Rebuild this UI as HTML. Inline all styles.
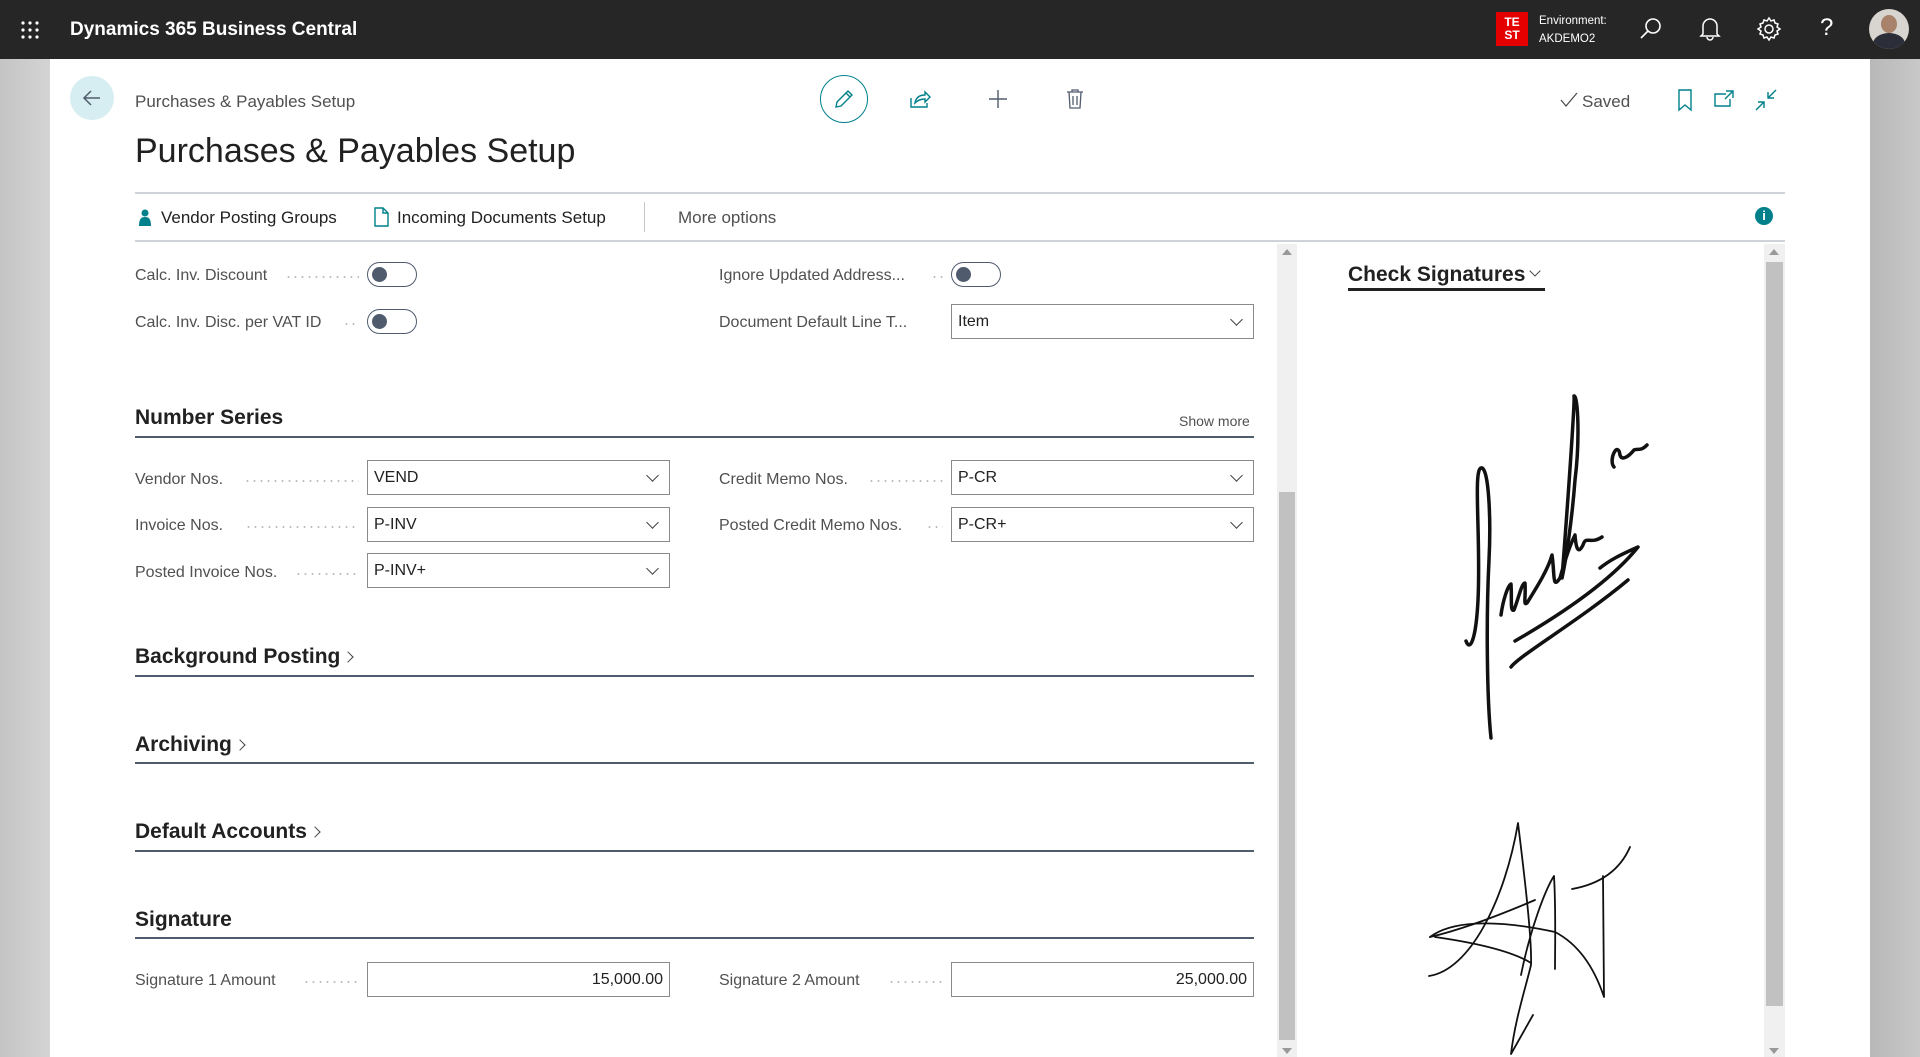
<!DOCTYPE html>
<html><head><meta charset="utf-8"><style>
*{margin:0;padding:0;box-sizing:border-box}
body{width:1920px;height:1057px;overflow:hidden;position:relative;font-family:"Liberation Sans",sans-serif;background:#fff;color:#212121}
.a{position:absolute}
.hdr{left:0;top:0;width:1920px;height:59px;background:#262626}
.lab{position:absolute;font-size:16px;color:#505050;white-space:nowrap;display:flex;align-items:center;height:20px}
.dots{position:absolute;height:2px;background-image:radial-gradient(circle,#bbb 0.9px,transparent 1.1px);background-size:7px 2px}
.inp{position:absolute;height:35px;border:1px solid #8a8a8a;background:#fff;font-size:16px;color:#212121;padding-left:6px;line-height:33px}
.inp .chev{position:absolute;right:12px;top:10px;width:9px;height:9px;border-right:1.3px solid #444;border-bottom:1.3px solid #444;transform:rotate(45deg)}
.tog{position:absolute;width:50px;height:25px;border:1.5px solid #505c6d;border-radius:13px}
.tog:after{content:"";position:absolute;left:4px;top:3.5px;width:15px;height:15px;border-radius:50%;background:#505c6d}
.sec{position:absolute;left:135px;font-size:21px;color:#212121;font-weight:600}
.line{position:absolute;left:135px;width:1119px;height:1.5px;background:#505c6d}
.ch{display:inline-block;width:8px;height:8px;border-right:1.3px solid #444;border-top:1.3px solid #444;transform:rotate(45deg);margin-left:4px;position:relative;top:-2px}
</style></head><body>
<div class="a" style="left:0;top:59px;width:50px;height:998px;background:linear-gradient(90deg,#c4c4c4,#d4d4d4)"></div>
<div class="a" style="left:1870px;top:59px;width:50px;height:998px;background:linear-gradient(90deg,#b8b8b8,#c8c8c8)"></div>
<div class="a hdr"></div>
<svg class="a" style="left:20px;top:20px" width="20" height="20"><g fill="#fff"><circle cx="3" cy="3" r="1.6"/><circle cx="10" cy="3" r="1.6"/><circle cx="17" cy="3" r="1.6"/><circle cx="3" cy="10" r="1.6"/><circle cx="10" cy="10" r="1.6"/><circle cx="17" cy="10" r="1.6"/><circle cx="3" cy="17" r="1.6"/><circle cx="10" cy="17" r="1.6"/><circle cx="17" cy="17" r="1.6"/></g></svg>
<div class="a" style="left:70px;top:19px;color:#fff;font-size:19px;font-weight:600">Dynamics 365 Business Central</div>
<div class="a" style="left:1496px;top:12px;width:32px;height:34px;background:#e50000;color:#fff;font-size:12px;font-weight:700;line-height:13px;text-align:center;padding-top:4px">TE<br>ST</div>
<div class="a" style="left:1539px;top:12px;color:#fff;font-size:11.5px;line-height:18px">Environment:<br>AKDEMO2</div>
<svg class="a" style="left:1638px;top:16px" width="26" height="26" fill="none" stroke="#fff" stroke-width="1.6"><circle cx="15" cy="10" r="7"/><path d="M10 15 3 22"/></svg>
<svg class="a" style="left:1698px;top:16px" width="24" height="26" fill="none" stroke="#fff" stroke-width="1.5"><path d="M5 18V10a7 7 0 0 1 14 0v8l2 2H3z M9 21a3 3 0 0 0 6 0"/></svg>
<svg class="a" style="left:1756px;top:16px" width="26" height="26" fill="none" stroke="#fff" stroke-width="1.5"><circle cx="13" cy="13" r="4"/><path d="M13 2l2 3 3-1 1 3 3 1-1 3 3 2-3 2 1 3-3 1-1 3-3-1-2 3-2-3-3 1-1-3-3-1 1-3-3-2 3-2-1-3 3-1 1-3 3 1z"/></svg>
<div class="a" style="left:1820px;top:14px;color:#fff;font-size:24px">?</div>
<div class="a" style="left:1869px;top:9px;width:40px;height:40px;border-radius:50%;background:#d8d4cf;overflow:hidden"><div class="a" style="left:12px;top:6px;width:16px;height:18px;border-radius:50%;background:#a8826a"></div><div class="a" style="left:4px;top:24px;width:32px;height:22px;border-radius:50% 50% 0 0;background:#2b2d38"></div></div>

<div class="a" style="left:70px;top:76px;width:44px;height:44px;border-radius:50%;background:#d6eef1"></div>
<svg class="a" style="left:80px;top:86px" width="24" height="24" fill="none" stroke="#505c6d" stroke-width="1.5"><path d="M20 12H4M11 5 4 12l7 7"/></svg>
<div class="a" style="left:135px;top:92px;font-size:17px;color:#505050">Purchases &amp; Payables Setup</div>
<div class="a" style="left:135px;top:132px;font-size:34px;color:#212121;font-weight:300">Purchases &amp; Payables Setup</div>
<div class="a" style="left:820px;top:75px;width:48px;height:48px;border-radius:50%;border:1.5px solid #00808a"></div>
<svg class="a" style="left:832px;top:87px" width="24" height="24" fill="none" stroke="#00808a" stroke-width="1.4"><path d="M4 20l1-5L16 4l4 4L9 19z M14 6l4 4"/></svg>
<svg class="a" style="left:908px;top:88px" width="24" height="22" fill="none" stroke="#00808a" stroke-width="1.4"><path d="M3 10v9h16v-4 M7 15c1-6 5-8 10-8V4l5 5-5 5v-3c-4 0-7 1-10 4z"/></svg>
<svg class="a" style="left:987px;top:88px" width="22" height="22" fill="none" stroke="#505c6d" stroke-width="1.4"><path d="M11 2v18M2 11h18"/></svg>
<svg class="a" style="left:1065px;top:88px" width="20" height="22" fill="none" stroke="#505c6d" stroke-width="1.3"><path d="M2 4h16M7 4V2h6v2M4 4l1 16h10l1-16M8 8v9M12 8v9"/></svg>
<svg class="a" style="left:1560px;top:92px" width="18" height="16" fill="none" stroke="#505050" stroke-width="1.3"><path d="M1 8l5 6L17 1"/></svg>
<div class="a" style="left:1582px;top:92px;font-size:17px;color:#505050">Saved</div>
<svg class="a" style="left:1676px;top:88px" width="18" height="24" fill="none" stroke="#00808a" stroke-width="1.4"><path d="M3 2h12v20l-6-5-6 5z"/></svg>
<svg class="a" style="left:1712px;top:88px" width="24" height="22" fill="none" stroke="#00808a" stroke-width="1.4"><path d="M14 6H3v12h15v-7 M14 3h7v7 M21 3l-8 8"/></svg>
<svg class="a" style="left:1754px;top:88px" width="24" height="24" fill="none" stroke="#00808a" stroke-width="1.4"><path d="M22 2l-8 8M14 4v6h6 M2 22l8-8M4 14h6v6"/></svg>

<div class="a" style="left:135px;top:192px;width:1650px;height:1.5px;background:#d0d4d8"></div>
<svg class="a" style="left:139px;top:209px" width="12" height="18" fill="#00808a"><circle cx="6" cy="4" r="3.5"/><path d="M0 17c0-7 2-9 6-9s6 2 6 9z"/></svg>
<div class="a" style="left:161px;top:208px;font-size:17px;color:#212121">Vendor Posting Groups</div>
<svg class="a" style="left:373px;top:207px" width="16" height="20" fill="none" stroke="#00808a" stroke-width="1.4"><path d="M2 1h8l5 5v13H2z M10 1v5h5"/></svg>
<div class="a" style="left:397px;top:208px;font-size:17px;color:#212121">Incoming Documents Setup</div>
<div class="a" style="left:644px;top:202px;width:1px;height:30px;background:#c8c8c8"></div>
<div class="a" style="left:678px;top:208px;font-size:17px;color:#505050">More options</div>
<div class="a" style="left:1755px;top:207px;width:18px;height:18px;border-radius:50%;background:#00808a;color:#fff;font-size:13px;font-weight:700;text-align:center;line-height:18px">i</div>
<div class="a" style="left:135px;top:240px;width:1650px;height:1.5px;background:#d0d4d8"></div>

<div class="lab" style="left:135px;top:266px">Calc. Inv. Discount</div><div class="dots" style="left:285px;top:276px;width:74px"></div><div class="tog" style="left:367px;top:262px"></div>
<div class="lab" style="left:135px;top:313px">Calc. Inv. Disc. per VAT ID</div><div class="dots" style="left:343px;top:323px;width:16px"></div><div class="tog" style="left:367px;top:309px"></div>
<div class="lab" style="left:719px;top:266px">Ignore Updated Address...</div><div class="dots" style="left:931px;top:276px;width:12px"></div><div class="tog" style="left:951px;top:262px"></div>
<div class="lab" style="left:719px;top:313px">Document Default Line T...</div><div class="inp" style="left:951px;top:304px;width:303px">Item<span class="chev"></span></div>

<div class="sec" style="top:406px">Number Series</div>
<div class="a" style="left:1179px;top:413px;font-size:14px;color:#505050">Show more</div>
<div class="line" style="top:436px"></div>

<div class="lab" style="left:135px;top:470px">Vendor Nos.</div><div class="dots" style="left:244px;top:480px;width:115px"></div><div class="inp" style="left:367px;top:460px;width:303px">VEND<span class="chev"></span></div>
<div class="lab" style="left:135px;top:516px">Invoice Nos.</div><div class="dots" style="left:245px;top:526px;width:114px"></div><div class="inp" style="left:367px;top:507px;width:303px">P-INV<span class="chev"></span></div>
<div class="lab" style="left:135px;top:563px">Posted Invoice Nos.</div><div class="dots" style="left:295px;top:573px;width:64px"></div><div class="inp" style="left:367px;top:553px;width:303px">P-INV+<span class="chev"></span></div>
<div class="lab" style="left:719px;top:470px">Credit Memo Nos.</div><div class="dots" style="left:868px;top:480px;width:75px"></div><div class="inp" style="left:951px;top:460px;width:303px">P-CR<span class="chev"></span></div>
<div class="lab" style="left:719px;top:516px">Posted Credit Memo Nos.</div><div class="dots" style="left:926px;top:526px;width:17px"></div><div class="inp" style="left:951px;top:507px;width:303px">P-CR+<span class="chev"></span></div>

<div class="sec" style="top:645px">Background Posting<span class="ch"></span></div><div class="line" style="top:675px"></div>
<div class="sec" style="top:733px">Archiving<span class="ch"></span></div><div class="line" style="top:762px"></div>
<div class="sec" style="top:820px">Default Accounts<span class="ch"></span></div><div class="line" style="top:850px"></div>
<div class="sec" style="top:908px">Signature</div><div class="line" style="top:937px"></div>
<div class="lab" style="left:135px;top:971px">Signature 1 Amount</div><div class="dots" style="left:303px;top:981px;width:56px"></div><div class="inp" style="left:367px;top:962px;width:303px;text-align:right;padding-right:6px">15,000.00</div>
<div class="lab" style="left:719px;top:971px">Signature 2 Amount</div><div class="dots" style="left:888px;top:981px;width:55px"></div><div class="inp" style="left:951px;top:962px;width:303px;text-align:right;padding-right:6px">25,000.00</div>

<div class="a" style="left:1277px;top:244px;width:20px;height:813px;background:#f0f0f0"></div>
<div class="a" style="left:1279px;top:492px;width:16px;height:548px;background:#c1c1c1"></div>
<div class="a" style="left:1282px;top:249px;border:5px solid transparent;border-bottom:6px solid #999;border-top:0"></div>
<div class="a" style="left:1282px;top:1048px;border:5px solid transparent;border-top:6px solid #999;border-bottom:0"></div>

<div class="a" style="left:1348px;top:263px;font-size:21px;color:#212121;font-weight:600">Check Signatures<span class="ch" style="transform:rotate(135deg);top:-6px;margin-left:6px"></span></div>
<div class="a" style="left:1348px;top:288px;width:197px;height:2.5px;background:#212121"></div>
<div class="a" style="left:1764px;top:244px;width:21px;height:813px;background:#f0f0f0"></div>
<div class="a" style="left:1766px;top:262px;width:17px;height:744px;background:#c1c1c1"></div>
<div class="a" style="left:1769px;top:249px;border:5px solid transparent;border-bottom:6px solid #999;border-top:0"></div>
<div class="a" style="left:1769px;top:1048px;border:5px solid transparent;border-top:6px solid #999;border-bottom:0"></div>

<svg class="a" style="left:0;top:0" width="1920" height="1057" fill="none" stroke="#111" stroke-linecap="round" stroke-linejoin="round">
<g stroke-width="3.5">
<path d="M1466,641 C1470,652 1476,640 1478,600 C1481,540 1473,470 1481,468 C1489,466 1491,520 1489,560 C1486,620 1487,700 1491,738"/>
<path d="M1501,615 C1503,600 1508,585 1511,584 C1512,600 1510,612 1514,610 C1518,600 1522,582 1525,583 C1526,598 1523,606 1527,603 C1535,590 1548,570 1552,555 C1555,575 1552,590 1560,578 C1565,560 1570,545 1575,535 C1576,548 1578,555 1583,545 C1586,535 1590,545 1602,537"/>
<path d="M1562,578 C1568,500 1575,400 1574,396 C1578,395 1580,440 1575,480 C1572,520 1566,560 1562,578"/>
<path d="M1515,641 C1560,615 1610,582 1638,547 C1620,555 1610,560 1600,568"/>
<path d="M1511,667 C1520,655 1580,620 1628,580"/>
<path d="M1614,467 C1608,460 1618,440 1620,455 C1622,462 1630,455 1634,450 C1638,448 1640,452 1647,445"/>
</g>
<g stroke-width="1.8">
<path d="M1429,976 C1470,970 1505,900 1518,823 C1525,880 1532,940 1531,965 C1525,990 1515,1020 1511,1054 L1533,1015"/>
<path d="M1430,937 C1460,930 1500,915 1535,900"/>
<path d="M1435,937 C1470,942 1510,950 1531,963"/>
<path d="M1430,937 C1450,922 1490,918 1555,932 C1580,945 1595,970 1604,997 L1603,876"/>
<path d="M1521,975 C1530,930 1545,890 1554,876 C1556,910 1555,950 1555,969"/>
<path d="M1572,889 C1600,884 1620,870 1630,847"/>
</g>
</svg>
</body></html>
